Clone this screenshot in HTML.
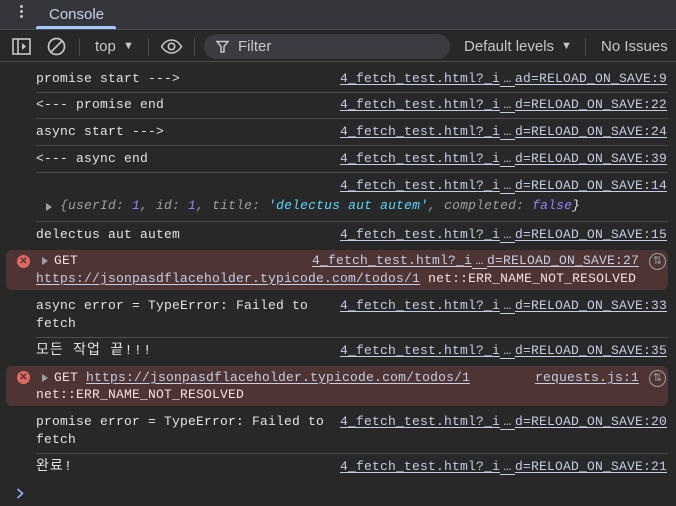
<!DOCTYPE html>
<html><head><meta charset="utf-8"><style>
*{margin:0;padding:0;box-sizing:border-box}
body{width:676px;height:506px;background:#282828;overflow:hidden;position:relative;font-family:"Liberation Sans",sans-serif;color:#e3e3e3}
.top{position:absolute;left:0;top:0;width:676px;height:30px;background:#35363b;border-bottom:1px solid #4a4c50}
.tab{position:absolute;left:49px;top:6px;font-size:15px;color:#c7d3ea}
.tabline{position:absolute;left:36px;top:26px;width:80px;height:3px;background:#a8c7fa;border-radius:2px 2px 0 0}
.dots{position:absolute;left:20px;top:5px;width:3px}
.dots i{display:block;width:3px;height:3px;border-radius:50%;background:#c4c7c5;margin-bottom:2px}
.tb{position:absolute;left:0;top:31px;width:676px;height:31px;background:#282828;border-bottom:1px solid #4a4c50;font-size:15px;color:#c4c7c5}
.tb span{position:absolute;top:7px}
.sep{position:absolute;top:7px;width:1px;height:18px;background:#4a4c50}
.filter{position:absolute;left:204px;top:3px;width:246px;height:25px;background:#3a3c41;border-radius:13px}
.m{font-family:"Liberation Mono","Noto Sans CJK KR",monospace;font-size:13px;letter-spacing:0.2px;position:absolute;white-space:pre;line-height:18px}
.k{font-family:"Liberation Mono","Noto Sans CJK KR",monospace;font-size:14px;position:absolute;white-space:pre;line-height:18px;letter-spacing:1px}
.l{color:#c5cde6;text-decoration:underline;text-underline-offset:2px;right:9px}
.l b{font-weight:normal;display:inline-block;width:15px;text-align:center;background:linear-gradient(#c5cde6,#c5cde6) 0 16px/100% 1px no-repeat;vertical-align:top}
.hr{position:absolute;left:36px;right:8px;height:1px;background:#4a4c50}
.err{position:absolute;left:6px;width:662px;background:#4e3534;border-radius:6px}
.e{color:#f9dedc}
.x{position:absolute;width:13px;height:13px;border-radius:50%;background:#e46962;color:#4e3534;font-size:10px;line-height:13px;text-align:center;font-weight:bold}
.tri{position:absolute;width:0;height:0;border-left:6px solid #9aa0a6;border-top:4px solid transparent;border-bottom:4px solid transparent}
.ci{position:absolute;width:17px;height:17px;border:1.5px solid #9aa0a6;border-radius:50%;color:#9aa0a6;font-size:11px;text-align:center;line-height:14px}
</style></head><body>
<div class="top"><div class="dots"><i></i><i></i><i></i></div><div class="tab">Console</div><div class="tabline"></div></div>
<div class="tb">
<svg style="position:absolute;left:12px;top:7px" width="19" height="17" viewBox="0 0 19 17"><rect x="1" y="1" width="17" height="15" fill="none" stroke="#c4c7c5" stroke-width="1.6"/><line x1="6" y1="1" x2="6" y2="16" stroke="#c4c7c5" stroke-width="1.6"/><path d="M10 5l4 3.5-4 3.5z" fill="#c4c7c5"/></svg>
<svg style="position:absolute;left:47px;top:6px" width="19" height="19" viewBox="0 0 19 19"><circle cx="9.5" cy="9.5" r="8" fill="none" stroke="#c4c7c5" stroke-width="1.7"/><line x1="4" y1="15" x2="15" y2="4" stroke="#c4c7c5" stroke-width="1.7"/></svg>
<div class="sep" style="left:79px"></div>
<span style="left:95px">top</span><span style="left:123px;font-size:11px;top:9px">▼</span>
<div class="sep" style="left:148px"></div>
<svg style="position:absolute;left:160px;top:8px" width="23" height="15" viewBox="0 0 23 15"><path d="M1.5 7.5C5 2 9 1 11.5 1S18 2 21.5 7.5C18 13 14 14 11.5 14S5 13 1.5 7.5z" fill="none" stroke="#c4c7c5" stroke-width="1.6"/><circle cx="11.5" cy="7.5" r="3.2" fill="none" stroke="#c4c7c5" stroke-width="1.6"/></svg>
<div class="sep" style="left:194px"></div>
<div class="filter"><svg style="position:absolute;left:12px;top:6px" width="13" height="13" viewBox="0 0 13 13"><path d="M1 1.5h11L8 6.5V12H5V6.5z" fill="none" stroke="#c4c7c5" stroke-width="1.5"/></svg><span style="left:34px;top:4px;color:#c4c7c5">Filter</span></div>
<span style="left:464px">Default levels</span><span style="left:561px;font-size:11px;top:9px">▼</span>
<div class="sep" style="left:585px"></div>
<span style="left:601px">No Issues</span>
</div>

<div class="m" style="left:36px;top:70px">promise start ---&gt;</div><div class="m l" style="top:70px">4_fetch_test.html?_i<b>…</b>ad=RELOAD_ON_SAVE:9</div>
<div class="hr" style="top:92px"></div>
<div class="m" style="left:36px;top:96px">&lt;--- promise end</div><div class="m l" style="top:96px">4_fetch_test.html?_i<b>…</b>d=RELOAD_ON_SAVE:22</div>
<div class="hr" style="top:118px"></div>
<div class="m" style="left:36px;top:123px">async start ---&gt;</div><div class="m l" style="top:123px">4_fetch_test.html?_i<b>…</b>d=RELOAD_ON_SAVE:24</div>
<div class="hr" style="top:145px"></div>
<div class="m" style="left:36px;top:150px">&lt;--- async end</div><div class="m l" style="top:150px">4_fetch_test.html?_i<b>…</b>d=RELOAD_ON_SAVE:39</div>
<div class="hr" style="top:172px"></div>
<div class="m l" style="top:177px">4_fetch_test.html?_i<b>…</b>d=RELOAD_ON_SAVE:14</div>
<div class="tri" style="left:46px;top:203px"></div>
<div class="m" style="left:60px;top:197px;font-style:italic;color:#9aa0a6">{userId: <span style="color:#9980ff">1</span>, id: <span style="color:#9980ff">1</span>, title: <span style="color:#5cd5fb">'delectus aut autem'</span>, completed: <span style="color:#9980ff">false</span><span style="color:#e3e3e3">}</span></div>
<div class="hr" style="top:221px"></div>
<div class="m" style="left:36px;top:226px">delectus aut autem</div><div class="m l" style="top:226px">4_fetch_test.html?_i<b>…</b>d=RELOAD_ON_SAVE:15</div>

<div class="err" style="top:250px;height:40px"></div>
<div class="x" style="left:17px;top:255px">✕</div><div class="tri" style="left:42px;top:257px"></div>
<div class="m e" style="left:54px;top:252px">GET</div><div class="m l" style="top:252px;right:37px">4_fetch_test.html?_i<b>…</b>d=RELOAD_ON_SAVE:27</div>
<div class="ci" style="left:649px;top:253px">⇅</div>
<div class="m e" style="left:36px;top:270px"><span style="color:#c5cde6;text-decoration:underline;text-underline-offset:2px">https://jsonpasdflaceholder.typicode.com/todos/1</span> net::ERR_NAME_NOT_RESOLVED</div>

<div class="m" style="left:36px;top:297px">async error = TypeError: Failed to</div>
<div class="m" style="left:36px;top:315px">fetch</div><div class="m l" style="top:297px">4_fetch_test.html?_i<b>…</b>d=RELOAD_ON_SAVE:33</div>
<div class="hr" style="top:337px"></div>
<div class="k" style="left:36px;top:342px">모든 작업 끝!!!</div><div class="m l" style="top:342px">4_fetch_test.html?_i<b>…</b>d=RELOAD_ON_SAVE:35</div>

<div class="err" style="top:366px;height:40px"></div>
<div class="x" style="left:17px;top:371px">✕</div><div class="tri" style="left:42px;top:374px"></div>
<div class="m e" style="left:54px;top:369px">GET <span style="color:#c5cde6;text-decoration:underline;text-underline-offset:2px">https://jsonpasdflaceholder.typicode.com/todos/1</span></div>
<div class="m l" style="top:369px;right:37px">requests.js:1</div>
<div class="ci" style="left:649px;top:370px">⇅</div>
<div class="m e" style="left:36px;top:386px">net::ERR_NAME_NOT_RESOLVED</div>

<div class="m" style="left:36px;top:413px">promise error = TypeError: Failed to</div>
<div class="m" style="left:36px;top:431px">fetch</div><div class="m l" style="top:413px">4_fetch_test.html?_i<b>…</b>d=RELOAD_ON_SAVE:20</div>
<div class="hr" style="top:453px"></div>
<div class="k" style="left:36px;top:458px">완료!</div><div class="m l" style="top:458px">4_fetch_test.html?_i<b>…</b>d=RELOAD_ON_SAVE:21</div>
<svg style="position:absolute;left:16px;top:488px" width="8" height="11" viewBox="0 0 8 11"><path d="M1.5 1l5 4.5-5 4.5" fill="none" stroke="#8ab4f8" stroke-width="1.6"/></svg>
</body></html>
